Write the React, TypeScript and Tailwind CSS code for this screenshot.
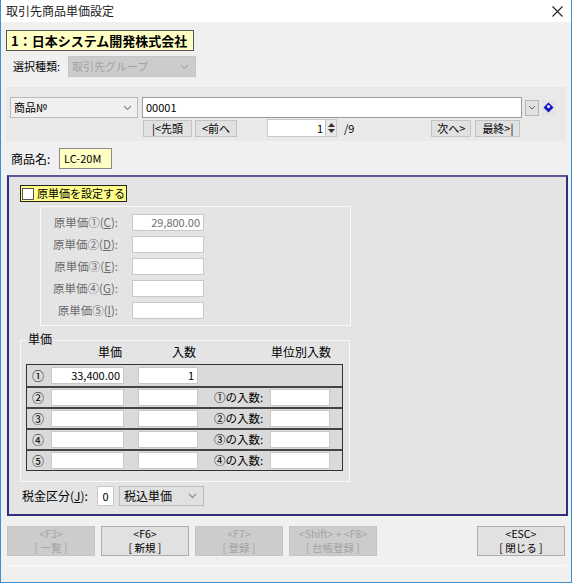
import React from 'react';

const font = { fontFamily: '"Noto Sans CJK JP", "Liberation Sans", sans-serif' };

function Input({ w, value, disabled }: { w: string; value?: string; disabled?: boolean }) {
  return (
    <div
      className={`${w} h-[17px] bg-white border border-[#c8c8c8] flex items-center justify-end pr-[3px] text-[11px] leading-none ${
        disabled ? 'text-[#6d6d6d]' : 'text-black'
      }`}
    >
      {value}
    </div>
  );
}

function Chevron({ color = '#8a8a8a' }: { color?: string }) {
  return (
    <svg width="9" height="6" viewBox="0 0 9 6">
      <path d="M1 1 L4.5 4.5 L8 1" fill="none" stroke={color} strokeWidth="1.1" />
    </svg>
  );
}

function FnButton({ top, bottom, disabled }: { top: string; bottom: string; disabled?: boolean }) {
  return (
    <div
      className={`w-[88px] h-[30px] flex flex-col items-center justify-center text-[10.5px] leading-[14px] whitespace-nowrap border ${
        disabled
          ? 'bg-[#cccccc] border-[#c4c4c4] text-[#a3a3a3]'
          : 'bg-[#e1e1e1] border-[#adadad] text-black'
      }`}
    >
      <span className="h-[14px]">{top}</span>
      <span className="h-[14px]">{bottom}</span>
    </div>
  );
}

const origRows = [
  { label: '原単価①(', key: 'C', value: '29,800.00' },
  { label: '原単価②(', key: 'D', value: '' },
  { label: '原単価③(', key: 'E', value: '' },
  { label: '原単価④(', key: 'G', value: '' },
  { label: '原単価⑤(', key: 'I', value: '' },
];

const unitRows = [
  { no: '①', price: '33,400.00', qty: '1', label: '' },
  { no: '②', price: '', qty: '', label: '①の入数:' },
  { no: '③', price: '', qty: '', label: '②の入数:' },
  { no: '④', price: '', qty: '', label: '③の入数:' },
  { no: '⑤', price: '', qty: '', label: '④の入数:' },
];

export default function App() {
  return (
    <div
      className="w-[572px] h-[583px] bg-[#f0f0f0] border-x border-b border-[#3a8fd6] flex flex-col text-[12px] text-black overflow-hidden"
      style={font}
    >
      {/* タイトルバー */}
      <div className="h-[22px] bg-white flex items-center justify-between pl-[5px] pr-[8px] shrink-0">
        <span className="text-[12px] leading-none text-[#222]">取引先商品単価設定</span>
        <svg width="11" height="11" viewBox="0 0 11 11">
          <path d="M0.5 0.5 L10.5 10.5 M10.5 0.5 L0.5 10.5" stroke="#222" strokeWidth="1.1" />
        </svg>
      </div>

      <div className="px-[5px] flex flex-col">
        {/* 会社名 */}
        <div className="mt-[8px] w-[188px] h-[21px] bg-[#ffffc4] border border-[#555] flex items-center pl-[4px] text-[13px] font-bold leading-none whitespace-nowrap">
          1：日本システム開発株式会社
        </div>

        {/* 選択種類 */}
        <div className="mt-[5px] h-[21px] flex items-center">
          <span className="ml-[7px] w-[55px] text-[11px] whitespace-nowrap">選択種類:</span>
          <div className="w-[128px] h-[21px] bg-[#cccccc] border border-[#c4c4c4] flex items-center justify-between pl-[3px] pr-[6px] text-[#a3a3a3] text-[11px]">
            <span>取引先グループ</span>
            <Chevron color="#aaaaaa" />
          </div>
        </div>

        {/* 商品番号パネル */}
        <div className="mt-[8px] h-[56px] bg-[#e9e9e9] border-t border-[#fafafa] flex flex-col pl-[4px] pt-[11px]">
          <div className="h-[21px] flex items-center">
            <div className="w-[128px] h-[21px] bg-[#f0f0f0] border border-[#bcbcbc] flex items-center justify-between pl-[3px] pr-[5px] text-[11px]">
              <span>商品№</span>
              <Chevron />
            </div>
            <div className="ml-[4px] w-[380px] h-[21px] bg-white border border-[#9b9b9b] flex items-center pl-[3px] text-[11px]">
              00001
            </div>
            <div className="ml-[3px] w-[14px] h-[16px] bg-[#e1e1e1] border border-[#b5b5b5] flex items-center justify-center">
              <svg width="8" height="5" viewBox="0 0 8 5">
                <path d="M1 1 L4 4 L7 1" fill="none" stroke="#666" strokeWidth="1" />
              </svg>
            </div>
            <div className="ml-[3px] w-[13px] h-[16px] bg-[#e4e4e4] flex items-center justify-center">
              <svg width="11" height="11" viewBox="0 0 11 11">
                <path d="M5.5 0.5 L10.5 5.5 L5.5 10.5 L0.5 5.5 Z" fill="#1515c8" />
                <circle cx="5.5" cy="4.5" r="1.5" fill="#ffffff" />
              </svg>
            </div>
          </div>
          <div className="mt-[1px] h-[18px] flex items-center text-[11px]">
            <div className="ml-[133px] w-[49px] h-[17px] bg-[#e1e1e1] border border-[#c4c4c4] flex items-center justify-center">|&lt;先頭</div>
            <div className="ml-[3px] w-[42px] h-[17px] bg-[#e1e1e1] border border-[#c4c4c4] flex items-center justify-center">&lt;前へ</div>
            <div className="ml-[30px] w-[70px] h-[18px] bg-white border border-[#c8c8c8] flex items-center justify-end">
              <span className="pr-[2px]">1</span>
              <div className="w-[11px] h-[16px] bg-[#e8e8e8] border-l border-[#c8c8c8] flex flex-col items-center justify-center gap-[2px]">
                <svg width="7" height="4" viewBox="0 0 7 4"><path d="M0 4 L3.5 0 L7 4 Z" fill="#333" /></svg>
                <svg width="7" height="4" viewBox="0 0 7 4"><path d="M0 0 L3.5 4 L7 0 Z" fill="#333" /></svg>
              </div>
            </div>
            <span className="ml-[7px]">/9</span>
            <div className="ml-[77px] w-[40px] h-[17px] bg-[#e1e1e1] border border-[#c4c4c4] flex items-center justify-center">次へ&gt;</div>
            <div className="ml-[4px] w-[45px] h-[17px] bg-[#e1e1e1] border border-[#c4c4c4] flex items-center justify-center">最終&gt;|</div>
          </div>
        </div>

        {/* 商品名 */}
        <div className="mt-[7px] h-[21px] flex items-center">
          <span className="ml-[5px] w-[48px] text-[12px]">商品名:</span>
          <div className="w-[53px] h-[21px] bg-[#ffffc4] border border-[#8a8a8a] flex items-center pl-[4px] text-[11px]">LC-20M</div>
        </div>

        {/* メインパネル */}
        <div className="mt-[6px] ml-[1px] w-[561px] h-[341px] bg-[#e4e4e4] border-2 border-[#2f2f7c] border-t-[#5a5a9a] flex flex-col">
          <div className="mt-[8px] ml-[11px] w-[107px] h-[17px] bg-[#ffff88] border border-[#222] flex items-center whitespace-nowrap">
            <div className="ml-[1px] w-[12px] h-[12px] bg-white border border-[#555] shrink-0" />
            <span className="ml-[3px] text-[11px] leading-none">原単価を設定する</span>
          </div>

          {/* 原単価 */}
          <div className="mt-[4px] ml-[31px] w-[311px] h-[120px] border border-[#f9f9f9] flex flex-col pt-[7px] gap-[5px]">
            {origRows.map((r) => (
              <div key={r.key} className="h-[17px] flex items-center">
                <span className="w-[77px] text-right text-[11.5px] text-[#6d6d6d] leading-none whitespace-nowrap">
                  {r.label}
                  <span className="underline">{r.key}</span>):
                </span>
                <div className="ml-[14px]">
                  <Input w="w-[72px]" value={r.value} disabled />
                </div>
              </div>
            ))}
          </div>

          {/* 単価 */}
          <div className="relative mt-[14px] ml-[11px] w-[330px] h-[142px] border border-[#f9f9f9] flex flex-col">
            <span className="absolute left-[5px] top-[-9px] px-[2px] bg-[#e4e4e4] text-[12px] leading-[14px]">単価</span>
            <div className="mt-[3px] h-[16px] flex items-center text-[12px] leading-none">
              <span className="ml-[77px]">単価</span>
              <span className="ml-[50px]">入数</span>
              <span className="ml-[75px]">単位別入数</span>
            </div>
            <div className="mt-[4px] ml-[5px] w-[317px] border border-[#333] flex flex-col">
              {unitRows.map((r, i) => (
                <div
                  key={r.no}
                  className={`h-[21px] bg-[#dadada] flex items-center ${i > 0 ? 'border-t-2 border-[#444]' : ''}`}
                >
                  <span className="ml-[5px] w-[19px] text-[12px] leading-none">{r.no}</span>
                  <Input w="w-[73px]" value={r.price} />
                  <div className="ml-[14px]">
                    <Input w="w-[60px]" value={r.qty} />
                  </div>
                  {r.label && (
                    <>
                      <span className="ml-[16px] w-[56px] text-[11.5px] leading-none whitespace-nowrap">{r.label}</span>
                      <Input w="w-[60px]" />
                    </>
                  )}
                </div>
              ))}
            </div>
          </div>

          {/* 税金区分 */}
          <div className="mt-[4px] h-[20px] flex items-center">
            <span className="ml-[13px] w-[75px] text-[12px] leading-none whitespace-nowrap">
              税金区分(<span className="underline">J</span>):
            </span>
            <div className="w-[17px] h-[20px] bg-white border border-[#c8c8c8] flex items-center justify-center text-[11px]">0</div>
            <div className="ml-[5px] w-[85px] h-[20px] bg-[#e1e1e1] border border-[#bcbcbc] flex items-center justify-between pl-[4px] pr-[6px] text-[12px]">
              <span>税込単価</span>
              <Chevron />
            </div>
          </div>
        </div>

        {/* ファンクションボタン */}
        <div className="mt-[10px] ml-[1px] flex items-center">
          <FnButton top="<F3>" bottom="[ 一覧 ]" disabled />
          <div className="ml-[6px]">
            <FnButton top="<F6>" bottom="[ 新規 ]" />
          </div>
          <div className="ml-[6px]">
            <FnButton top="<F7>" bottom="[ 登録 ]" disabled />
          </div>
          <div className="ml-[6px]">
            <FnButton top="<Shift> + <F8>" bottom="[ 台帳登録 ]" disabled />
          </div>
          <div className="ml-[100px]">
            <FnButton top="<ESC>" bottom="[ 閉じる ]" />
          </div>
        </div>
        <div className="mt-[9px] h-px bg-[#fbfbfb]" />
      </div>
    </div>
  );
}
